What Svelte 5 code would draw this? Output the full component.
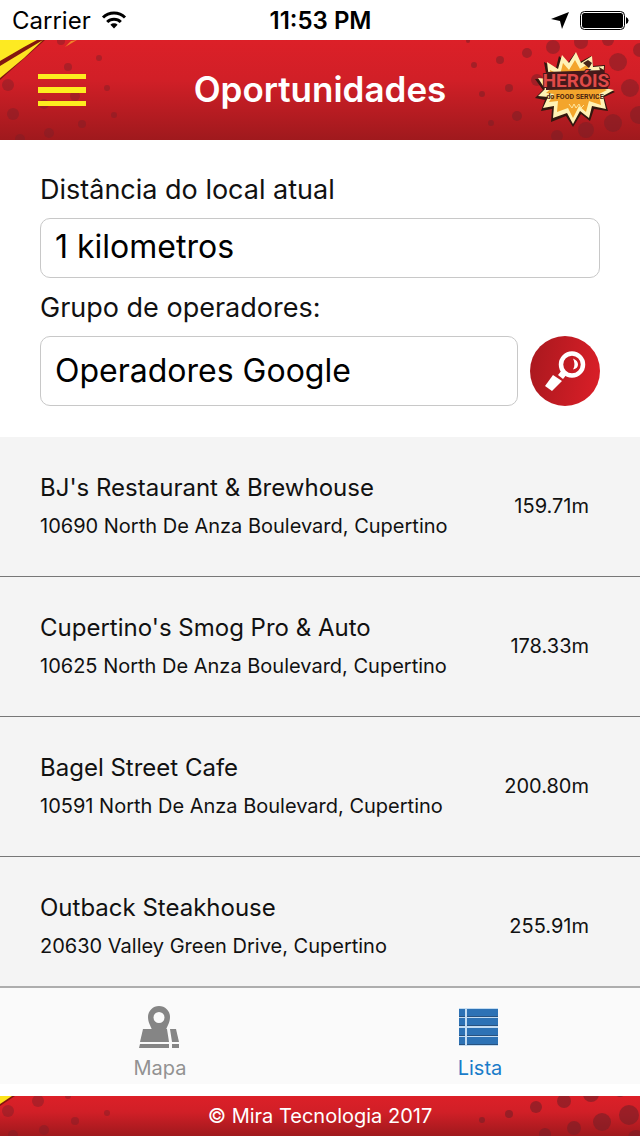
<script>
  let distance = $state('1 kilometros');
  let group = $state('Operadores Google');
  let view = $state('lista');

  const places = [
    { name: "BJ's Restaurant & Brewhouse", address: '10690 North De Anza Boulevard, Cupertino', distance: '159.71m' },
    { name: "Cupertino's Smog Pro & Auto", address: '10625 North De Anza Boulevard, Cupertino', distance: '178.33m' },
    { name: 'Bagel Street Cafe', address: '10591 North De Anza Boulevard, Cupertino', distance: '200.80m' },
    { name: 'Outback Steakhouse', address: '20630 Valley Green Drive, Cupertino', distance: '255.91m' }
  ];

  // halftone dots: x, y, radius
  const headerLeft = [
    [61, 1, 4], [99, 18, 3], [68, 27, 4], [8, 45, 6], [13, 74, 6], [107, 48, 3],
    [75, 56, 5], [44, 64, 5], [114, 75, 3], [82, 84, 4], [49, 93, 5], [20, 99, 5]
  ];
  const headerRight = [
    [28, 1, 2], [34, 25, 3], [60, 20, 4], [87, 13, 5], [113, 7, 7], [141, 2, 7], [168, 0, 6],
    [178, 22, 9], [200, 10, 7], [42, 54, 3], [69, 48, 4], [97, 40, 6], [51, 83, 3], [77, 76, 5],
    [117, 96, 6], [146, 90, 8], [173, 83, 9], [199, 75, 9], [190, 48, 9]
  ];
  const footerLeft = [[8, 15, 6], [38, 5, 6], [68, 0, 3], [75, 25, 4], [107, 17, 3], [44, 34, 5], [13, 39, 5]];
  const footerRight = [
    [12, 24, 3], [39, 18, 4], [66, 11, 6], [94, 5, 7], [121, -2, 8], [150, -5, 6],
    [75, 38, 6], [104, 32, 7], [132, 26, 9], [159, 19, 10], [166, 42, 8]
  ];
</script>

<div class="app">
  <div class="status">
    <div class="side">
      <span>Carrier</span>
      <svg width="26" height="20" viewBox="0 0 26 20" fill="none" stroke="#000" stroke-width="3">
        <path d="M2 7.5a15.6 15.6 0 0 1 22 0" />
        <path d="M6.2 12a9.6 9.6 0 0 1 13.6 0" />
        <path d="M13 18.5l-3.6-3.7a5.2 5.2 0 0 1 7.2 0z" fill="#000" stroke="none" />
      </svg>
    </div>
    <strong>11:53 PM</strong>
    <div class="side end">
      <svg width="18" height="18" viewBox="0 0 18 18">
        <path d="M18 1L11 18L9 10L0 8z" />
      </svg>
      <svg width="50" height="20" viewBox="0 0 50 20">
        <rect x="1.500" y="1.500" width="44" height="18" rx="4" fill="none" stroke="#000" />
        <rect x="3" y="3" width="41" height="15" rx="2.500" />
        <path d="M47 7q2.500 1 2.500 3.500t-2.500 3.500z" />
      </svg>
    </div>
  </div>

  <header class="banner">
    <svg class="art left" width="130" height="100" viewBox="0 0 130 100">
      {#each headerLeft as [x, y, r]}
        <circle cx={x} cy={y} r={r} fill="#7c1f27" opacity="0.45" />
      {/each}
      <path d="M0 0H45L0 40z" fill="#82170f" />
      <path d="M0 0H37L24 7L0 21z" fill="#fdea22" />
      <path d="M0 26L43 0L24 18L0 38z" fill="#fde322" />
      <path d="M65 7L71 1L77 0z" fill="#f0842a" />
    </svg>
    <svg class="art right" width="200" height="100" viewBox="0 0 200 100">
      {#each headerRight as [x, y, r]}
        <circle cx={x} cy={y} r={r} fill="#7c1f27" opacity="0.55" />
      {/each}
    </svg>

    <button class="menu" aria-label="Menu">
      <svg width="48" height="32" viewBox="0 0 48 32" fill="#fdec1f">
        <rect width="48" height="5" />
        <rect y="13" width="48" height="6" />
        <rect y="27" width="48" height="5" />
      </svg>
    </button>
    <h1>Oportunidades</h1>
    <svg class="logo" width="82" height="78" viewBox="0 0 82 78">
      <path
        d="M41 2L46 11L57 5L59 15L71 14L70 26L76 30L72 36L81 41L70 46L74 60L60 58L56 70L47 63L39 76L32 65L17 71L18 58L7 60L11 49L1 47L9 39L1 28L13 28L10 11L22 17L25 5L33 13z"
        fill="#33170f"
      />
      <path
        d="M42 1L47 12L58 5L59 16L70 15L69 27L74 30L71 37L80 39L69 45L72 58L58 55L55 67L46 60L39 73L33 62L19 67L20 55L9 57L14 46L4 45L11 38L4 27L15 28L13 11L24 18L28 4L35 12z"
        fill="#fff2b5"
      />
      <path
        d="M41 9L46 18L54 13L55 23L64 20L64 35L73 39L65 43L67 54L55 50L52 61L45 55L39 67L34 57L23 61L24 50L15 51L20 43L12 42L19 36L16 19L26 24L29 12L35 19z"
        fill="#f3a52c"
      />
      <path d="M49 12l5-3 4 3-3 5zM65 16l5 3-3 4z" fill="#45251a" />
      <path d="M12 21L70 19L74 38L12 39z" fill="#46191a" />
      <text class="logo-name" x="42" y="36" text-anchor="middle">HERÓIS</text>
      <text class="logo-sub" x="41" y="48" text-anchor="middle">do FOOD SERVICE</text>
      <path d="M35 53l3 4 2-4 2 4 3-4 2 4 3-3" fill="none" stroke="#ffe7a0" />
    </svg>
  </header>

  <form class="filters" onsubmit={(e) => e.preventDefault()}>
    <label for="distance">Distância do local atual</label>
    <input id="distance" class="distance" type="text" bind:value={distance} />
    <label for="group">Grupo de operadores:</label>
    <div class="search-row">
      <input id="group" type="text" bind:value={group} />
      <button class="search" aria-label="Buscar">
        <svg width="42" height="42" viewBox="0 0 42 42">
          <circle cx="28" cy="14.500" r="11" fill="none" stroke="#fff" stroke-width="4.500" />
          <path d="M29 8.500q5 2 5 6t-5 5q3-5 0-11z" fill="#fff" />
          <path d="M18 20l5 4-4 5-5-4z" fill="#fff" />
          <path d="M9 25l9 6L8 41L1 36z" fill="#fff" />
        </svg>
      </button>
    </div>
  </form>

  <ul class="places">
    {#each places as place (place.name)}
      <li>
        <div class="info">
          <h2>{place.name}</h2>
          <p>{place.address}</p>
        </div>
        <span class="meters">{place.distance}</span>
      </li>
    {/each}
  </ul>

  <nav class="tabs">
    <button class:active={view === 'mapa'} onclick={() => (view = 'mapa')}>
      <svg width="42" height="42" viewBox="0 0 42 42" fill="#858585">
        <path d="M4 23H28L30 36H1z" />
        <path d="M31 23H37L40 36H33z" />
        <path d="M1 38H30V42H0zM33 38H40V42H33z" />
        <path
          d="M20 0a11 11 0 0 1 11 11c0 6-3 9-4 13H13c-1-4-4-7-4-13a11 11 0 0 1 11-11zM20 6a5 5 0 1 0 0 11a5 5 0 1 0 0-11z"
          fill-rule="evenodd"
        />
      </svg>
      <span>Mapa</span>
    </button>
    <button class:active={view === 'lista'} onclick={() => (view = 'lista')}>
      <svg width="42" height="42" viewBox="0 0 42 42">
        <path d="M0 2h39v38H0z" fill="#c3dcf2" />
        {#each [3, 12, 22, 31] as y}
          <path d="M0 {y}h6v8H0zM8 {y}h31v8H8z" fill="#2d72b5" />
          <path d="M0 {y + 7.5}h6M8 {y + 7.5}h31" stroke="#28527f" />
        {/each}
      </svg>
      <span>Lista</span>
    </button>
  </nav>

  <footer class="banner">
    <svg class="art left" width="130" height="40" viewBox="0 0 130 40">
      {#each footerLeft as [x, y, r]}
        <circle cx={x} cy={y} r={r} fill="#7c1f27" opacity="0.45" />
      {/each}
      <path d="M0 0H15L0 10z" fill="#82170f" />
      <path d="M0 0H12L0 8z" fill="#fde31c" />
    </svg>
    <svg class="art right" width="170" height="40" viewBox="0 0 170 40">
      {#each footerRight as [x, y, r]}
        <circle cx={x} cy={y} r={r} fill="#7c1f27" opacity="0.65" />
      {/each}
    </svg>
    <span>© Mira Tecnologia 2017</span>
  </footer>
</div>

<style>
  :global(body) {
    margin: 0;
    background: #fff;
    color: #111;
    font-family: Inter, 'Liberation Sans', sans-serif;
  }

  .app {
    display: flex;
    flex-direction: column;
    height: 100vh;
  }

  button {
    padding: 0;
    border: none;
    background: none;
    font: inherit;
    cursor: pointer;
  }

  svg {
    display: block;
  }

  /* --- Status bar --- */
  .status {
    display: flex;
    align-items: center;
    flex: none;
    height: 40px;
    padding: 0 11px 0 12px;
    font-size: 24px;
    color: #000;
  }

  .status strong {
    font-weight: 600;
  }

  .side {
    display: flex;
    flex: 1;
    align-items: center;
    gap: 10px;
  }

  .end {
    justify-content: flex-end;
  }

  /* --- Red banners --- */
  .banner {
    position: relative;
    display: flex;
    align-items: center;
    flex: none;
    overflow: hidden;
    background: linear-gradient(#dc2028, #d11f27 40%, #9f191d);
    color: #fff;
  }

  .art {
    position: absolute;
    top: 0;
  }

  .left {
    left: 0;
  }

  .right {
    right: 0;
  }

  header {
    justify-content: space-between;
    height: 100px;
    padding: 0 24px 0 38px;
  }

  .menu,
  .logo,
  h1 {
    position: relative;
  }

  .menu {
    width: 68px;
  }

  h1 {
    margin: 0;
    padding-bottom: 2px;
    font-size: 35px;
    font-weight: 600;
    line-height: 42px;
  }

  .logo-name {
    font: 700 19px Roboto, sans-serif;
    fill: #e04a48;
    stroke: #46191a;
    stroke-width: 2px;
    paint-order: stroke;
  }

  .logo-sub {
    font: 700 7px Roboto, sans-serif;
    fill: #4a2410;
  }

  /* --- Filters --- */
  .filters {
    flex: none;
    padding: 32px 40px 31px;
  }

  label {
    display: block;
    margin-bottom: 10px;
    font-size: 27px;
    line-height: 36px;
  }

  input {
    box-sizing: border-box;
    width: 100%;
    height: 70px;
    padding: 0 14px 2px;
    border: 1px solid #c8c8c8;
    border-radius: 10px;
    background: #fff;
    color: #000;
    font: inherit;
    font-size: 32px;
  }

  .distance {
    display: block;
    height: 60px;
    margin-bottom: 12px;
    padding-bottom: 4px;
  }

  .search-row {
    display: flex;
    gap: 12px;
  }

  .search-row input {
    flex: 1;
    min-width: 0;
  }

  .search {
    display: grid;
    place-items: center;
    flex: none;
    width: 70px;
    height: 70px;
    border-radius: 50%;
    background: linear-gradient(100deg, #a8181e, #dc1f28);
  }

  /* --- List --- */
  .places {
    flex: 1;
    min-height: 0;
    margin: 0;
    padding: 0;
    overflow: hidden;
    background: #f4f4f4;
    list-style: none;
  }

  li {
    display: flex;
    align-items: center;
    justify-content: space-between;
    box-sizing: border-box;
    height: 140px;
    padding: 0 51px 2px 40px;
    border-bottom: 1px solid #777;
  }

  h2,
  p {
    margin: 0;
    font-weight: 400;
  }

  h2 {
    margin-bottom: 8px;
    font-size: 24px;
    line-height: 32px;
  }

  p,
  .meters {
    font-size: 20px;
    line-height: 28px;
  }

  /* --- Tabs --- */
  .tabs {
    display: flex;
    flex: none;
    margin-bottom: 12px;
    border-top: 2px solid #adadad;
    background: #fafafa;
  }

  .tabs button {
    display: flex;
    flex: 1;
    flex-direction: column;
    align-items: center;
    gap: 6px;
    padding: 18px 0 2px;
    color: #929292;
    font-size: 20px;
    line-height: 28px;
  }

  .tabs .active {
    color: #1a7cc9;
  }

  footer {
    justify-content: center;
    height: 40px;
    background: linear-gradient(#d02026, #ab1b20);
    font-size: 20px;
  }

  footer span {
    position: relative;
  }
</style>
